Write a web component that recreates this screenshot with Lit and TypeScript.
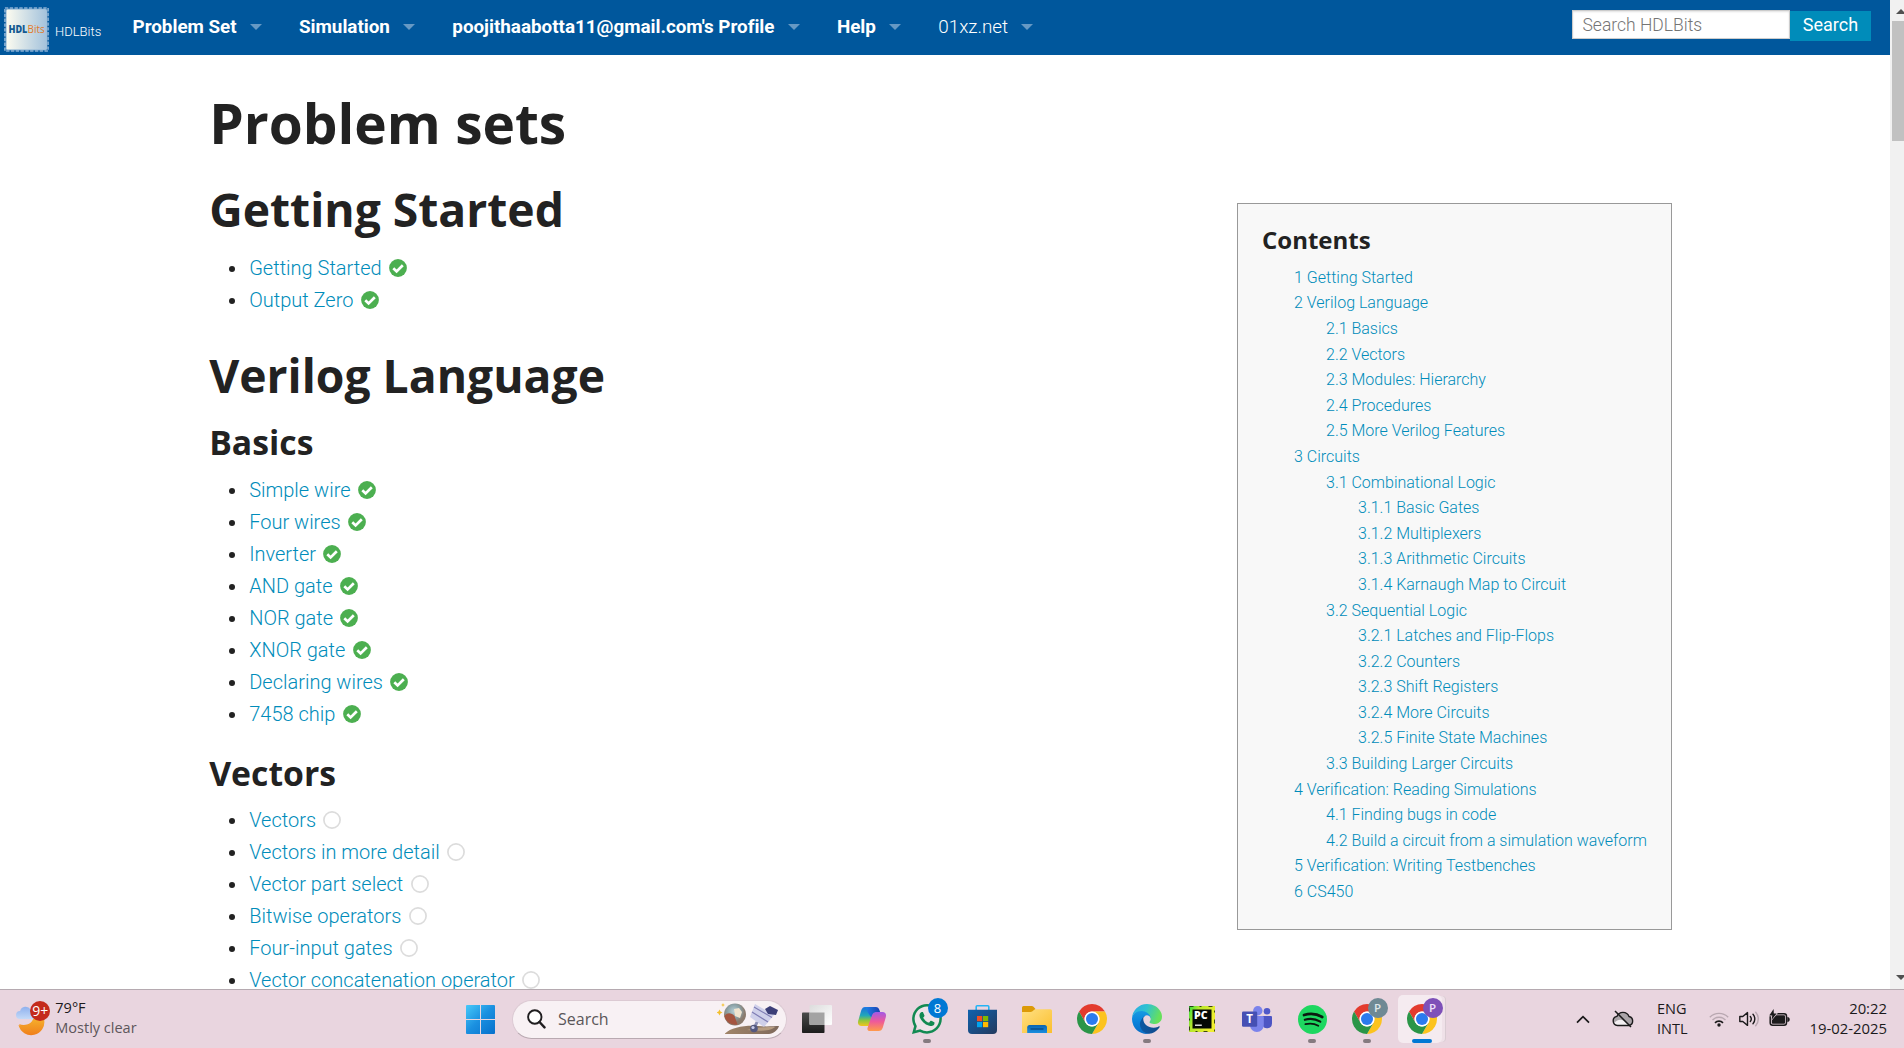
import { LitElement, html, css, svg, nothing, TemplateResult } from "lit";
import { customElement } from "lit/decorators.js";

type Item = [label: string, done: boolean];
type TocEntry = [level: number, label: string];

const NAV: { label: string; light?: boolean }[] = [
  { label: "Problem Set" },
  { label: "Simulation" },
  { label: "poojithaabotta11@gmail.com's Profile" },
  { label: "Help" },
  { label: "01xz.net", light: true },
];

const STARTED: Item[] = [["Getting Started", true], ["Output Zero", true]];
const BASICS: Item[] = [
  ["Simple wire", true], ["Four wires", true], ["Inverter", true], ["AND gate", true],
  ["NOR gate", true], ["XNOR gate", true], ["Declaring wires", true], ["7458 chip", true],
];
const VECTORS: Item[] = [
  ["Vectors", false], ["Vectors in more detail", false], ["Vector part select", false],
  ["Bitwise operators", false], ["Four-input gates", false], ["Vector concatenation operator", false],
];

const TOC: TocEntry[] = [
  [1, "1 Getting Started"], [1, "2 Verilog Language"], [2, "2.1 Basics"], [2, "2.2 Vectors"],
  [2, "2.3 Modules: Hierarchy"], [2, "2.4 Procedures"], [2, "2.5 More Verilog Features"],
  [1, "3 Circuits"], [2, "3.1 Combinational Logic"], [3, "3.1.1 Basic Gates"],
  [3, "3.1.2 Multiplexers"], [3, "3.1.3 Arithmetic Circuits"], [3, "3.1.4 Karnaugh Map to Circuit"],
  [2, "3.2 Sequential Logic"], [3, "3.2.1 Latches and Flip-Flops"], [3, "3.2.2 Counters"],
  [3, "3.2.3 Shift Registers"], [3, "3.2.4 More Circuits"], [3, "3.2.5 Finite State Machines"],
  [2, "3.3 Building Larger Circuits"], [1, "4 Verification: Reading Simulations"],
  [2, "4.1 Finding bugs in code"], [2, "4.2 Build a circuit from a simulation waveform"],
  [1, "5 Verification: Writing Testbenches"], [1, "6 CS450"],
];

@customElement("hdl-nav")
export class HdlNav extends LitElement {
  static styles = css`
    :host { display: block; font-family: Roboto, sans-serif; }
    .bar { display: flex; align-items: flex-start; height: 55px; background: #00579c; color: #fff; }
    .logo { display: block; margin: 7px 0 0 4px; width: 45px; height: 45px; flex: none; }
    .site { flex: none; width: 76px; padding-left: 6px; box-sizing: border-box; font-size: 13px; font-weight: 300; line-height: 15px; margin-top: 24px; margin-right: 7.5px; }
    .item { display: flex; align-items: center; height: 55px; font-size: 18.85px; font-weight: 700; line-height: 55px; white-space: nowrap; margin-right: 37.4px; letter-spacing: -0.02px; }
    .light { font-weight: 300; }
    .caret { margin-left: 13px; margin-bottom: 1px; width: 0; height: 0; border: 6px solid transparent; border-top-color: #6699c4; border-bottom-width: 0; }
    .search { display: flex; margin-left: auto; margin-right: 19px; }
    .field { box-sizing: border-box; width: 218px; height: 29px; margin-top: 10px; padding-left: 9.5px; border: 1px solid #ccc; background: #fff; box-shadow: inset 0 1px 2px rgba(0,0,0,.12); color: #757575; font-size: 17.5px; font-weight: 300; line-height: 29px; }
    .go { box-sizing: border-box; width: 81px; height: 30px; margin-top: 11px; padding-bottom: 2px; background: #008cba; text-align: center; font-size: 18px; line-height: 27px; }
  `;
  render() {
    return html`<nav class="bar">
      <svg class="logo" viewBox="0 0 45 45">
        <defs><linearGradient id="lg" x1="0" x2="1"><stop offset="0" stop-color="#fdfcf0"/><stop offset="1" stop-color="#a3c2dc"/></linearGradient></defs>
        <rect x=".9" y="1" width="43.2" height="43" fill="none" stroke="#86aed3" stroke-width="1.6" stroke-dasharray="3.4 1.4"/>
        <rect x="2.2" y="2.2" width="40.6" height="40.6" rx="1.5" fill="url(#lg)" stroke="#b9d0e4" stroke-width=".8"/>
        <text x="4.4" y="26" font-family="Open Sans, sans-serif" font-size="10.4" font-weight="800" fill="#145a92" textLength="19" lengthAdjust="spacingAndGlyphs">HDL</text>
        <text x="23.6" y="26" font-family="Open Sans, sans-serif" font-size="10.4" font-weight="500" fill="#e07a2a" textLength="17" lengthAdjust="spacingAndGlyphs">Bits</text>
      </svg>
      <span class="site">HDLBits</span>
      ${NAV.map((n) => html`<span class="item ${n.light ? "light" : ""}">${n.label}<i class="caret"></i></span>`)}
      <div class="search"><div class="field">Search HDLBits</div><div class="go">Search</div></div>
    </nav>`;
  }
}

@customElement("problem-list")
export class ProblemList extends LitElement {
  static properties = { items: { attribute: false } };
  declare items: Item[];
  static styles = css`
    :host { display: block; font: 300 20px/32px Roboto, sans-serif; }
    .row { display: flex; align-items: center; height: 32px; color: #008cba; white-space: nowrap; }
    .dot { width: 6px; height: 6px; border-radius: 50%; background: #222; margin: 2px 14px 0 20px; }
    .mark { width: 18px; height: 18px; margin-left: 7.3px; display: block; }
  `;
  render() {
    return html`${this.items.map(([label, done]) => html`<div class="row"><i class="dot"></i><span>${label}</span>
      <svg class="mark" viewBox="0 0 18 18">${done
        ? svg`<circle cx="9" cy="9" r="8.9" fill="#4caf50"/><path d="M4.3 9.2l3.3 3.2 6.2-6.1" fill="none" stroke="#fff" stroke-width="2.7"/>`
        : svg`<circle cx="9" cy="9" r="8.1" fill="none" stroke="#dcdcdc" stroke-width="1.7"/>`}</svg></div>`)}`;
  }
}

@customElement("page-toc")
export class PageToc extends LitElement {
  static styles = css`
    :host { display: block; box-sizing: border-box; width: 435px; height: 727px; padding: 19px 24px; border: 1px solid #999; background: #f8f8f8; }
    .title { font: 700 24px/34px "Open Sans", sans-serif; color: #222; margin-bottom: 7.8px; }
    .row { font: 300 16px/25.6px Roboto, sans-serif; color: #008cba; white-space: nowrap; }
    .l1 { padding-left: 32px; } .l2 { padding-left: 64px; } .l3 { padding-left: 96px; }
  `;
  render() {
    return html`<div class="title">Contents</div>${TOC.map(([l, t]) => html`<div class="row l${l}">${t}</div>`)}`;
  }
}

const chrome = svg`<path fill="#e33b2e" d="M24 12H44.78A24 24 0 0 0 3.22 12L13.61 30A12 12 0 0 1 24 12Z"/>
  <path fill="#fcc31e" d="M44.78 12A24 24 0 0 1 24 48L34.39 30A12 12 0 0 0 24 12Z"/>
  <path fill="#2a9547" d="M3.22 12A24 24 0 0 0 24 48L34.39 30A12 12 0 0 1 13.61 30Z"/>
  <circle cx="24" cy="24" r="12" fill="#fff"/><circle cx="24" cy="24" r="9.6" fill="#2b7bee"/>`;

interface App { w: number; h: number; box: string; art: TemplateResult; badge?: string; badgeClass?: string; run?: boolean; active?: boolean }

const APPS: App[] = [
  { w: 30, h: 28, box: "0 0 30 28", art: svg`<defs><linearGradient id="tv" x2="0" y2="1"><stop stop-color="#4a4a4a"/><stop offset="1" stop-color="#1c1c1c"/></linearGradient><linearGradient id="tw" x2="1" y2="1"><stop stop-color="#dcdcdc"/><stop offset="1" stop-color="#fff"/></linearGradient></defs>
      <rect y="7.5" width="22.5" height="20.5" rx=".8" fill="url(#tv)"/><rect x="7.5" width="22.5" height="20" rx="1" fill="url(#tw)"/><path d="M7.5 7.5h15V20h-14a1 1 0 0 1-1-1z" fill="#a3a3a3"/>` },
  { w: 28, h: 26, box: "0 0 28 26", art: svg`<defs>
      <linearGradient id="ca" x2="0" y2="1"><stop stop-color="#1a6fe0"/><stop offset=".45" stop-color="#22a8b8"/><stop offset=".7" stop-color="#8cc63f"/><stop offset="1" stop-color="#f3c51c"/></linearGradient>
      <linearGradient id="cb" x2="0" y2="1"><stop stop-color="#a259e6"/><stop offset=".5" stop-color="#ee5a9a"/><stop offset="1" stop-color="#ff9a4a"/></linearGradient>
      <linearGradient id="cc"><stop stop-color="#1f8af0"/><stop offset="1" stop-color="#1a3fb0"/></linearGradient></defs>
      <path d="M7.4 1H16c2 0 3 1 2.4 3.2L14 17c-.8 2-2 3-4 3H3.5C.5 20-.6 17.6.3 14.4L3.2 4.5C4 2 5.2 1 7.4 1z" fill="url(#ca)"/>
      <path d="M20.6 25H12c-2 0-3-1-2.4-3.200L14 9c.8-2 2-3 4-3h6.500c3 0 4.100 2.400 3.200 5.600l-2.900 9.900C24 24 22.800 25 20.600 25z" fill="url(#cb)"/>
      <path d="M7.400 1h10.200c2.600 0 3.400 1.600 4 3.500l.5 1.500H18c-2 0-3.200 1-4 3l-.9 2.300L9.500 6C8.800 3 8.200 1 5.500 1.400z" fill="url(#cc)"/>` },
  { w: 30, h: 30, box: "0 0 16 16", run: true, badge: "8", badgeClass: "blue", art: svg`<circle cx="8" cy="8" r="6.8" fill="#eee3e9"/><path fill="#128a52" d="M13.601 2.326A7.854 7.854 0 0 0 7.994 0C3.627 0 .068 3.558.064 7.926c0 1.399.366 2.76 1.057 3.965L0 16l4.204-1.102a7.933 7.933 0 0 0 3.79.965h.004c4.368 0 7.926-3.558 7.93-7.93A7.898 7.898 0 0 0 13.6 2.326zM7.994 14.521a6.573 6.573 0 0 1-3.356-.92l-.24-.144-2.494.654.666-2.433-.156-.251a6.56 6.56 0 0 1-1.007-3.505c0-3.626 2.957-6.584 6.591-6.584a6.56 6.56 0 0 1 4.66 1.931 6.557 6.557 0 0 1 1.928 4.66c-.004 3.639-2.961 6.592-6.592 6.592zm3.615-4.934c-.197-.099-1.17-.578-1.353-.646-.182-.065-.315-.099-.445.099-.133.197-.513.646-.627.775-.114.133-.232.148-.43.05-.197-.1-.836-.308-1.592-.985-.59-.525-.985-1.175-1.103-1.372-.114-.198-.011-.304.088-.403.087-.088.197-.232.296-.346.1-.114.133-.198.198-.33.065-.134.034-.248-.015-.347-.05-.099-.445-1.076-.612-1.47-.16-.389-.323-.335-.445-.34-.114-.007-.247-.007-.38-.007a.729.729 0 0 0-.529.247c-.182.198-.691.677-.691 1.654 0 .977.71 1.916.81 2.049.098.133 1.394 2.132 3.383 2.992.47.205.84.326 1.129.418.475.152.904.129 1.246.08.38-.058 1.171-.48 1.338-.943.164-.464.164-.86.114-.943-.049-.084-.182-.133-.38-.232z"/>` },
  { w: 29, h: 29, box: "0 0 29 29", art: svg`<defs><linearGradient id="st" x2="1" y2="1"><stop stop-color="#0f62ae"/><stop offset="1" stop-color="#243a5e"/></linearGradient></defs>
      <path d="M8.200 6V1.700a.9.900 0 0 1 .9-.9h10.800a.9.900 0 0 1 .9.900V6" fill="none" stroke="#25b4f5" stroke-width="1.600"/><path d="M0 4.800h29V25a4 4 0 0 1-4 4H4a4 4 0 0 1-4-4z" fill="url(#st)"/>
      <path d="M9 11h5.200v5.200H9z" fill="#f25022"/><path d="M15 11h5.200v5.200H15z" fill="#7fba00"/><path d="M9 17h5.200v5.200H9z" fill="#00a4ef"/><path d="M15 17h5.200v5.200H15z" fill="#ffb900"/>` },
  { w: 30, h: 27, box: "0 0 30 27", art: svg`<defs><linearGradient id="fe" x2="1" y2="1"><stop stop-color="#ffe084"/><stop offset="1" stop-color="#fbbf2d"/></linearGradient><linearGradient id="fb" x2="0" y2="1"><stop stop-color="#0a64b0"/><stop offset="1" stop-color="#1a8ee0"/></linearGradient></defs>
      <path d="M0 1.500A1.500 1.500 0 0 1 1.500 0h8.300c.7 0 1.200.3 1.700.8L13.500 3 10 8H0z" fill="#dc9a08"/><path d="M0 6h8.500c.8 0 1.400-.3 2-.8l1.400-1.300c.5-.5 1-.7 1.700-.7H28.500A1.500 1.500 0 0 1 30 4.700V27H0z" fill="url(#fe)"/>
      <path d="M5.200 27v-5.500A2.500 2.500 0 0 1 7.700 19h14.800a2.500 2.500 0 0 1 2.500 2.500V27z" fill="url(#fb)"/><path d="M8.500 23h13" stroke="#07437c" stroke-width="1.200"/>` },
  { w: 30, h: 30, box: "0 0 48 48", art: chrome },
  { w: 30, h: 30, box: "0 0 256 256", run: true, art: svg`<defs><linearGradient id="e1" x2="1"><stop stop-color="#0c59a4"/><stop offset="1" stop-color="#114a8b"/></linearGradient><linearGradient id="e2" x2="0" y2="1"><stop stop-color="#1b9de2"/><stop offset=".5" stop-color="#0883dc"/><stop offset="1" stop-color="#0a6cc4"/></linearGradient><linearGradient id="e3" x2="1" y2=".3"><stop stop-color="#2aa9e8"/><stop offset=".5" stop-color="#2fc2d0"/><stop offset="1" stop-color="#66e05c"/></linearGradient></defs>
      <path fill="url(#e1)" d="M231 190.500c-3.400 1.800-6.900 3.400-10.500 4.700a101.700 101.700 0 0 1-35.900 6.500c-47.300 0-88.500-32.500-88.500-74.300 0-11.600 6.400-22.200 16.600-27.600-42.800 1.800-53.800 46.400-53.800 72.500 0 74 68.100 81.400 82.800 81.400 7.900 0 19.800-2.300 27-4.600l1.300-.4a128.300 128.300 0 0 0 66.600-52.800 4 4 0 0 0-5.600-5.400z"/>
      <path fill="url(#e2)" d="M105.700 241.400a79.200 79.200 0 0 1-22.700-21.300 80.700 80.700 0 0 1 29.500-120c3.200-1.500 8.500-4.100 15.600-4a32.400 32.400 0 0 1 25.700 13 31.900 31.900 0 0 1 6.300 18.700c0-.2 24.500-79.600-80-79.600-43.900 0-80 41.600-80 78.200a130.200 130.200 0 0 0 12.100 56 128 128 0 0 0 156.400 67 75.500 75.500 0 0 1-62.800-8z"/>
      <path fill="url(#e3)" d="M152.300 148.900c-.9 1-3.400 2.500-3.400 5.600 0 2.600 1.700 5.100 4.700 7.200 14.400 10 41.400 8.700 41.500 8.700 10.700 0 21.100-2.900 30.300-8.300A61.400 61.400 0 0 0 256 109c.3-22.400-8-37.300-11.300-43.900C223.500 23.900 177.700 0 128 0A128 128 0 0 0 0 126.200c.5-36.500 36.800-66 80-66 3.500 0 23.500.3 42 10 16.300 8.600 24.900 19 30.800 29.200 6.200 10.700 7.300 24.100 7.300 29.500 0 5.300-2.700 13.300-7.800 20z"/>` },
  { w: 26, h: 26, box: "0 0 26 26", art: svg`<defs><linearGradient id="pc" x2="1" y2=".4"><stop stop-color="#2fe03c"/><stop offset=".35" stop-color="#b4e62c"/><stop offset="1" stop-color="#f0ee30"/></linearGradient></defs>
      <rect width="26" height="26" fill="url(#pc)"/><rect x=".5" y=".5" width="25" height="25" fill="none" stroke="#16200a" stroke-width=".8" stroke-dasharray="4 6 2 7"/><rect x="3.500" y="3.500" width="19" height="19" fill="#050805"/>
      <text x="5" y="13.200" font-family="Open Sans, sans-serif" font-size="9.800" font-weight="800" fill="#fff" textLength="13.500" lengthAdjust="spacingAndGlyphs">PC</text><path d="M6 19.200h6.800" stroke="#fff" stroke-width="1.300"/>` },
  { w: 30, h: 26, box: "0 0 30 26", art: svg`<circle cx="25" cy="5.200" r="3.300" fill="#5059c9"/><path d="M20 10h9a1 1 0 0 1 1 1v6.500a4.800 4.800 0 0 1-9.500 1z" fill="#4d55c4"/><circle cx="15.800" cy="4.700" r="4.700" fill="#7b83eb"/><path d="M8.500 10h12a1.300 1.300 0 0 1 1.300 1.300V19a6.800 6.800 0 0 1-13.800 0z" fill="#7b83eb"/>
      <rect y="5.500" width="15.200" height="15.200" rx="1.300" fill="#4650b4"/><text x="7.600" y="17.300" text-anchor="middle" font-family="Open Sans, sans-serif" font-size="11.500" font-weight="700" fill="#fff">T</text>` },
  { w: 29, h: 29, box: "0 0 29 29", run: true, art: svg`<circle cx="14.500" cy="14.500" r="14.500" fill="#1ed760"/><g fill="none" stroke="#0b1a10" stroke-linecap="round"><path d="M6 10c6-1.800 12.800-1.200 18.200 2" stroke-width="2.700"/><path d="M6.800 14.800c5-1.500 10.800-.9 15.500 1.800" stroke-width="2.200"/><path d="M7.400 19.200c4.300-1.100 9-.7 12.900 1.600" stroke-width="1.800"/></g>` },
  { w: 30, h: 30, box: "0 0 48 48", run: true, badge: "P", badgeClass: "grey", art: chrome },
  { w: 30, h: 30, box: "0 0 48 48", active: true, badge: "P", badgeClass: "purple", art: chrome },
];

@customElement("task-bar")
export class TaskBar extends LitElement {
  static styles = css`
    :host { display: block; font: 400 14.5px/20px "Open Sans", sans-serif; color: #1b1a1b; }
    .bar { display: flex; align-items: center; box-sizing: border-box; height: 59px; border-top: 1px solid #b5aab0; background: #e9d5df; }
    .weather { display: flex; align-items: center; box-sizing: border-box; width: 466px; padding-left: 15px; gap: 4.3px; }
    .weather svg { display: block; margin-top: -3px; }
    .temp { padding-bottom: 2px; }
    .dim { color: #5d565b; }
    .win { display: block; width: 29px; height: 31px; }
    .pill { display: flex; align-items: center; box-sizing: border-box; width: 275px; height: 39px; margin-left: 17px; padding: 0 7px 0 14px; border-radius: 20px; background: #f8f1f4; border: 1px solid #dccad3; border-bottom-color: #b9a9b1; font-size: 16px; color: #5a5659; }
    .pill .q { flex: 1; padding-left: 12px; }
    .apps { display: flex; margin-left: 2.5px; }
    .slot { position: relative; display: flex; align-items: center; justify-content: center; width: 55px; height: 58px; }
    .active::before { content: ""; position: absolute; left: 3px; top: 5px; width: 44px; height: 48px; border-radius: 5px; background: #f5ebf0; box-shadow: 4px 0 0 -1px #efe1e8, 5px 0 0 -1px #d9cbd2; }
    .slot svg { position: relative; display: block; overflow: visible; }
    .slot.active svg { z-index: 1; }
    .badge { position: absolute; z-index: 2; left: 28px; top: 8px; width: 20px; height: 20px; border-radius: 50%; text-align: center; color: #fff; font-size: 13px; line-height: 20px; }
    .blue { background: #0078d4; }
    .grey { background: #6f8994; color: #dfe6e9; font-weight: 600; font-size: 11.5px; }
    .purple { background: #7e50b8; color: #eee0fa; font-weight: 600; font-size: 11.5px; }
    .run { position: absolute; left: 23.5px; top: 49px; width: 8px; height: 4px; border-radius: 2px; background: #857a80; }
    .run.on { left: 17.5px; width: 20px; background: #0078d4; }
    .tray { display: flex; align-items: center; margin-left: auto; margin-right: 17px; }
    .tray svg { display: block; }
    .cloud { margin-left: 22px; }
    .speaker { margin-left: 10px; }
    .battery { margin-left: 9px; margin-top: -2px; }
    .lang { width: 31px; margin: 0 21px 0 23px; }
    .clock { width: 79px; margin-left: 18px; padding-bottom: 2px; text-align: right; font-size: 14.85px; white-space: nowrap; }
  `;
  render() {
    return html`<div class="bar">
      <div class="weather">
        <svg width="36" height="38" viewBox="0 0 36 38">
          <defs><linearGradient id="mo" x2="0" y2="1"><stop stop-color="#f5b02c"/><stop offset="1" stop-color="#f07f1c"/></linearGradient><linearGradient id="cl" x2="0" y2="1"><stop stop-color="#8fb1ee"/><stop offset="1" stop-color="#c4daf8"/></linearGradient></defs>
          <path d="M29 19.500a13.300 13.300 0 0 1-25 5.500c6 2.500 13 0 14.500-6z" fill="url(#mo)"/><path d="M29 20a12.800 12.800 0 0 1-25.500 6c7 2 14-.5 15.500-6.500z" fill="url(#mo)"/>
          <path d="M5 20a4 4 0 0 1 .1-8 5.800 5.800 0 0 1 10.500-1.500l5 9.500z" fill="url(#cl)"/>
          <circle cx="25" cy="12" r="10" fill="#c42b1c"/><text x="25.200" y="17" text-anchor="middle" font-family="Open Sans, sans-serif" font-size="14" fill="#fff">9+</text>
        </svg>
        <div class="temp"><div>79°F</div><div class="dim">Mostly clear</div></div>
      </div>
      <svg class="win" viewBox="0 0 29 31"><defs><linearGradient id="w" gradientUnits="userSpaceOnUse" x1="0" y1="0" x2="29" y2="30"><stop stop-color="#49cbfa"/><stop offset=".5" stop-color="#1b90e0"/><stop offset="1" stop-color="#0670cc"/></linearGradient></defs>
        <path d="M1 1h13v14H0V2a1 1 0 0 1 1-1zM15 1h13a1 1 0 0 1 1 1v13H15zM0 16h14v14H1a1 1 0 0 1-1-1zM15 16h14v13a1 1 0 0 1-1 1H15z" fill="url(#w)"/></svg>
      <div class="pill">
        <svg width="19" height="20" viewBox="0 0 19 20"><circle cx="7.800" cy="8" r="6.700" fill="#fff" stroke="#1f1d1f" stroke-width="1.900"/><path d="M12.500 13l5 5.400" stroke="#1f1d1f" stroke-width="2.400" stroke-linecap="round"/></svg>
        <span class="q">Search</span>
        <svg width="62" height="32" viewBox="0 0 62 32">
          <defs><radialGradient id="gl" cx=".45" cy=".35"><stop stop-color="#b9d0d6"/><stop offset=".6" stop-color="#8aa0a5"/><stop offset="1" stop-color="#8b7a6c"/></radialGradient><linearGradient id="gd"><stop stop-color="#a08468"/><stop offset="1" stop-color="#7f6a5c"/></linearGradient></defs>
          <path d="M8 30.500c6-6 20-8.500 33-7.500 9 1 16 0 21 0-1 4-6 8-10 8H8z" fill="url(#gd)"/><path d="M30 27c9-3 20-3 28-3-3 3-12 5-28 3z" fill="#b79d82"/>
          <circle cx="18" cy="11.500" r="11" fill="url(#gl)"/><path d="M7.500 13c3-4 7-3 10 0l3 8.500a11 11 0 0 1-13-8.500z" fill="#a5543f"/><path d="M17 6l5-1 3 4-2 6-5-2z" fill="#f0e4cf"/>
          <path d="M38 1l19 11-10 12-14-10z" fill="#cfd0ea"/><path d="M37 4l18 10.500M35 9l16 10" stroke="#7f7db4" stroke-width="1.200"/><path d="M48 6l5-3 8 4-2 5-8-1z" fill="#3c3f78"/><path d="M40 19l-3 7" stroke="#8d8fb4" stroke-width="3"/><circle cx="37" cy="25.500" r="3.800" fill="#55587f"/><circle cx="36" cy="24.500" r="1.600" fill="#c9cbe8"/>
          <path d="M2.500 6.500l1 2 2 1-2 1-1 2-1-2-2-1 2-1zM6 0l.6 1.400 1.400.6-1.400.6L6 4l-.6-1.400L4 2l1.400-.6z" fill="#f3bf2b"/>
        </svg>
      </div>
      <div class="apps">${APPS.map((a) => html`<div class="slot ${a.active ? "active" : ""}">
        <svg width=${a.w} height=${a.h} viewBox=${a.box}>${a.art}</svg>
        ${a.badge ? html`<span class="badge ${a.badgeClass}">${a.badge}</span>` : nothing}
        ${a.run || a.active ? html`<i class="run ${a.active ? "on" : ""}"></i>` : nothing}
      </div>`)}</div>
      <div class="tray">
        <svg width="14" height="9" viewBox="0 0 14 9"><path d="M1 7.700L7 1.600l6 6.100" fill="none" stroke="#1b1a1b" stroke-width="1.700"/></svg>
        <svg class="cloud" width="22" height="18" viewBox="0 0 22 18"><path d="M5.500 15.500a4.600 4.600 0 0 1-.6-9.100A6.500 6.500 0 0 1 17 6.500a4.600 4.600 0 0 1 0 9z" fill="#aaa4a8"/><path d="M2 13c4-4 7-4 10-2l5 4.500H5.500z" fill="#f4f0f2"/><path d="M5.500 15.500a4.600 4.600 0 0 1-.6-9.100A6.500 6.500 0 0 1 17 6.500a4.600 4.600 0 0 1 0 9z" fill="none" stroke="#1b1a1b" stroke-width="1.400"/><path d="M3 1l16 16" stroke="#1b1a1b" stroke-width="1.500"/></svg>
        <div class="lang"><div>ENG</div><div>INTL</div></div>
        <svg width="20" height="16" viewBox="0 0 20 16"><g fill="none" stroke-width="1.400"><path d="M.8 6.200a13 13 0 0 1 18.400 0" stroke="#b9a8b1"/><path d="M3.500 9a9.200 9.200 0 0 1 13 0" stroke="#b9a8b1"/><path d="M6 11.800a5.700 5.700 0 0 1 8 0" stroke="#1b1a1b" stroke-width="1.700"/></g><circle cx="10" cy="14" r="1.700" fill="#1b1a1b"/></svg>
        <svg class="speaker" width="21" height="16" viewBox="0 0 21 16"><g fill="none" stroke="#1b1a1b" stroke-width="1.400" stroke-linecap="round" stroke-linejoin="round"><path d="M.8 5.500h3L8.500 1.600v12.800L3.800 10.500h-3z"/><path d="M11.300 5.500a4 4 0 0 1 0 5M14 3.300a7 7 0 0 1 0 9.400"/><path d="M16.700 1.300a10 10 0 0 1 0 13.400" stroke="#b9a8b1"/></g></svg>
        <svg class="battery" width="21" height="18" viewBox="0 0 21 18"><rect x="1.200" y="4.700" width="16.300" height="11.600" rx="2.500" fill="none" stroke="#1b1a1b" stroke-width="1.500"/><rect x="2.800" y="6.300" width="13.200" height="8.400" rx="1" fill="#1b1a1b"/><path d="M18.300 8v5c1.600-.2 2.400-1.200 2.400-2.500S19.900 8.200 18.300 8z" fill="#1b1a1b"/><path d="M4.600 0L.3 6.600h3L2.500 11 7.600 4.500H4.800z" fill="#1b1a1b" stroke="#e9d5df" stroke-width="1.200" paint-order="stroke"/></svg>
        <div class="clock"><div>20:22</div><div>19-02-2025</div></div>
      </div>
    </div>`;
  }
}

@customElement("app-root")
export class AppRoot extends LitElement {
  static styles = css`
    :host { display: block; width: 1904px; height: 1048px; overflow: hidden; background: #fff; }
    .window { display: flex; height: 989px; overflow: hidden; }
    .page { width: 1890px; height: 989px; overflow: hidden; }
    .content { display: flex; justify-content: space-between; align-items: flex-start; height: 934px; overflow: hidden; padding: 0 218px 0 209.2px; box-sizing: border-box; }
    h1, h2, h3 { margin: 0; font-family: "Open Sans", sans-serif; font-weight: 700; color: #222; white-space: nowrap; }
    h1 { font-size: 55px; line-height: 77px; margin: 29px 0 16px; }
    h2 { font-size: 46.25px; line-height: 65px; margin-bottom: 10px; }
    h2.second { margin: 27px 0 11px; }
    h3 { font-size: 33.75px; line-height: 47px; margin-bottom: 8px; }
    h3.next { margin-top: 20px; margin-bottom: 7px; }
    page-toc { margin-top: 148px; }
    .scroll { display: flex; flex-direction: column; box-sizing: border-box; width: 14px; height: 989px; overflow: hidden; background: #f1f1f1; padding: 9px 0 9px 2px; }
    .up, .down { flex: none; width: 0; height: 0; margin-left: 4px; border: 5px solid transparent; }
    .up { border-top-width: 0; border-bottom-color: #505050; }
    .down { border-bottom-width: 0; border-top-color: #505050; margin-top: auto; }
    .thumb { flex: none; width: 12px; height: 120px; margin-top: 7px; background: #c1c1c1; }
  `;
  render() {
    return html`<div class="window">
        <div class="page">
          <hdl-nav></hdl-nav>
          <div class="content">
            <main>
              <h1>Problem sets</h1>
              <h2>Getting Started</h2>
              <problem-list .items=${STARTED}></problem-list>
              <h2 class="second">Verilog Language</h2>
              <h3>Basics</h3>
              <problem-list .items=${BASICS}></problem-list>
              <h3 class="next">Vectors</h3>
              <problem-list .items=${VECTORS}></problem-list>
            </main>
            <page-toc></page-toc>
          </div>
        </div>
        <div class="scroll"><i class="up"></i><i class="thumb"></i><i class="down"></i></div>
      </div>
      <task-bar></task-bar>`;
  }
}
